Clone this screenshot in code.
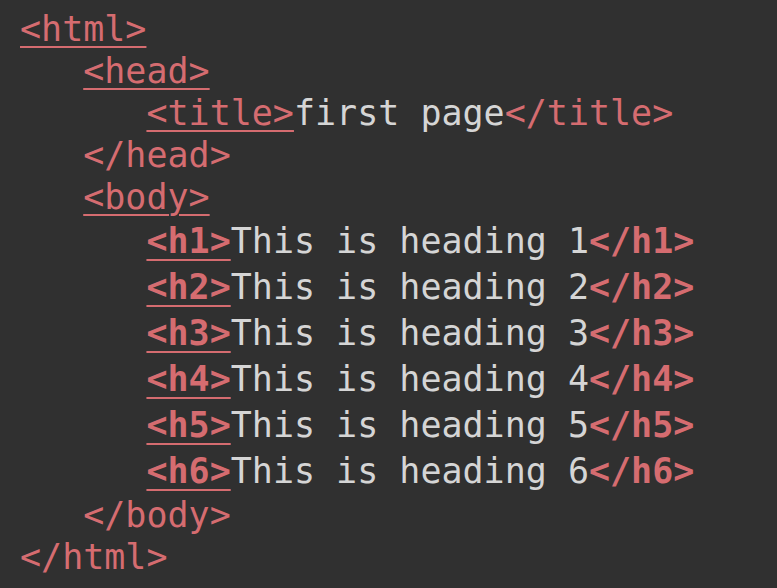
import React from "react";

const red = "text-[#d56c70]";
const txt = "text-[#d5d5d5]";

function Open({ children, bold }: { children: React.ReactNode; bold?: boolean }) {
  return bold ? (
    <span className={`${red} font-bold underline decoration-2 underline-offset-[6px]`}>{children}</span>
  ) : (
    <span className={`${red} underline decoration-2 underline-offset-[5px]`}>{children}</span>
  );
}

export default function App() {
  const headings = [1, 2, 3, 4, 5, 6];
  return (
    <div
      className="w-[777px] h-[588px] bg-[#303030] pt-[8px] pl-[20px] text-[35px] whitespace-pre overflow-hidden"
      style={{ fontFamily: '"DejaVu Sans Mono", "Liberation Mono", monospace' }}
    >
      <div className="h-[42px] leading-[42px]">
        <Open>{"<html>"}</Open>
      </div>
      <div className="h-[42px] leading-[42px]">
        {"   "}
        <Open>{"<head>"}</Open>
      </div>
      <div className="h-[42px] leading-[42px]">
        {"      "}
        <Open>{"<title>"}</Open>
        <span className={txt}>first page</span>
        <span className={red}>{"</title>"}</span>
      </div>
      <div className="h-[42px] leading-[42px]">
        {"   "}
        <span className={red}>{"</head>"}</span>
      </div>
      <div className="h-[42px] leading-[42px]">
        {"   "}
        <Open>{"<body>"}</Open>
      </div>
      {headings.map((n) => (
        <div key={n} className="h-[46px] leading-[46px]">
          {"      "}
          <Open bold>{`<h${n}>`}</Open>
          <span className={txt}>{`This is heading ${n}`}</span>
          <span className={`${red} font-bold`}>{`</h${n}>`}</span>
        </div>
      ))}
      <div className="h-[42px] leading-[42px]">
        {"   "}
        <span className={red}>{"</body>"}</span>
      </div>
      <div className="h-[42px] leading-[42px]">
        <span className={red}>{"</html>"}</span>
      </div>
    </div>
  );
}
